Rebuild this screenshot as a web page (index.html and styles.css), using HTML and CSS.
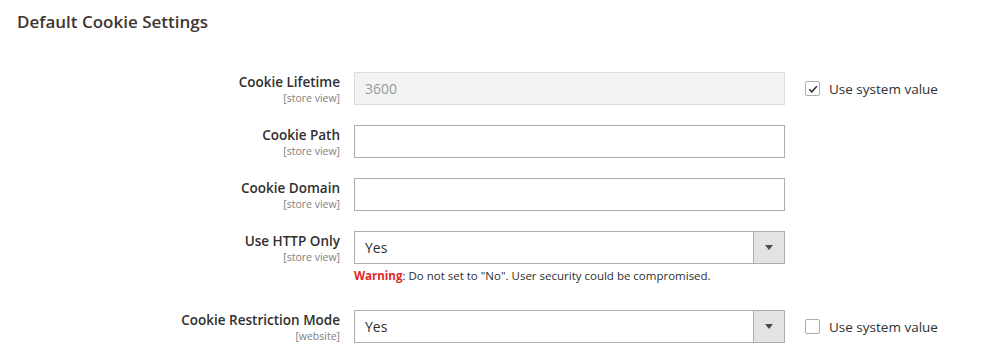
FILE: index.html
```html
<!DOCTYPE html>
<html>
<head>
<meta charset="utf-8">
<link rel="stylesheet" href="styles.css">
</head>
<body>
<div class="section">
  <h2 class="title">Default Cookie Settings</h2>
  <div class="rows">
    <div class="row">
      <div class="label"><span class="name">Cookie Lifetime</span><span class="scope">[store view]</span></div>
      <div class="control"><div class="input disabled">3600</div></div>
      <label class="sys"><span class="check checked"><svg width="12" height="12" viewBox="0 0 12 12"><path d="M2.2 6.2 L4.8 8.8 L9.8 3.2" fill="none" stroke="#333" stroke-width="1.6"/></svg></span>Use system value</label>
    </div>
    <div class="row">
      <div class="label"><span class="name">Cookie Path</span><span class="scope">[store view]</span></div>
      <div class="control"><div class="input"></div></div>
      <div></div>
    </div>
    <div class="row">
      <div class="label"><span class="name">Cookie Domain</span><span class="scope">[store view]</span></div>
      <div class="control"><div class="input"></div></div>
      <div></div>
    </div>
    <div class="row">
      <div class="label"><span class="name">Use HTTP Only</span><span class="scope">[store view]</span></div>
      <div class="control">
        <div class="select"><span class="value">Yes</span><span class="arrow"><svg width="8" height="5" viewBox="0 0 8 5"><path d="M0 0 H8 L4 5 Z" fill="#514943"/></svg></span></div>
        <p class="note"><b>Warning</b>: Do not set to "No". User security could be compromised.</p>
      </div>
      <div></div>
    </div>
    <div class="row">
      <div class="label"><span class="name">Cookie Restriction Mode</span><span class="scope">[website]</span></div>
      <div class="control">
        <div class="select"><span class="value">Yes</span><span class="arrow"><svg width="8" height="5" viewBox="0 0 8 5"><path d="M0 0 H8 L4 5 Z" fill="#514943"/></svg></span></div>
      </div>
      <label class="sys"><span class="check"></span>Use system value</label>
    </div>
  </div>
</div>
</body>
</html>
```
FILE: styles.css
```css
* { box-sizing: border-box; }
body {
  margin: 0;
  background: #fff;
  font-family: "Open Sans", "Liberation Sans", sans-serif;
  color: #303030;
}
.section { padding: 11px 0 0 17px; }
.title {
  margin: 0;
  font-size: 17px;
  font-weight: 600;
  color: #41362f;
  line-height: 22px;
}
.rows {
  margin-top: 39px;
  display: flex;
  flex-direction: column;
  gap: 20px;
}
.row {
  display: grid;
  grid-template-columns: 323px 431px auto;
  column-gap: 14px;
  align-items: start;
}
.label {
  display: flex;
  flex-direction: column;
  align-items: flex-end;
  text-align: right;
  padding-top: 1px;
}
.name {
  font-size: 13.5px;
  font-weight: 600;
  line-height: 19px;
  color: #303030;
}
.scope {
  font-size: 10.5px;
  line-height: 12px;
  color: #808080;
}
.input {
  height: 33px;
  border: 1px solid #adadad;
  background: #fff;
  font-size: 14px;
  line-height: 31px;
  padding: 0 10px;
}
.input.disabled {
  background: #f3f3f3;
  border-color: #dcdcdc;
  color: #9a9a9a;
}
.select {
  height: 33px;
  border: 1px solid #adadad;
  display: flex;
  font-size: 14px;
}
.select .value { flex: 1; line-height: 31px; padding-left: 10px; color: #303030; }
.select .arrow {
  width: 31px;
  background: #e3e3e3;
  border-left: 1px solid #adadad;
  display: flex;
  align-items: center;
  justify-content: center;
}
.note {
  margin: 4px 0 7px;
  font-size: 11.5px;
  line-height: 15px;
  color: #303030;
}
.note b { color: #e22626; font-weight: 700; }
.sys {
  display: flex;
  align-items: center;
  gap: 9px;
  margin-left: 6px;
  height: 33px;
  font-size: 13.5px;
  color: #303030;
}
.check {
  width: 15px;
  height: 15px;
  border: 1px solid #adadad;
  border-radius: 2px;
  background: #fff;
  display: flex;
  align-items: center;
  justify-content: center;
}
```
